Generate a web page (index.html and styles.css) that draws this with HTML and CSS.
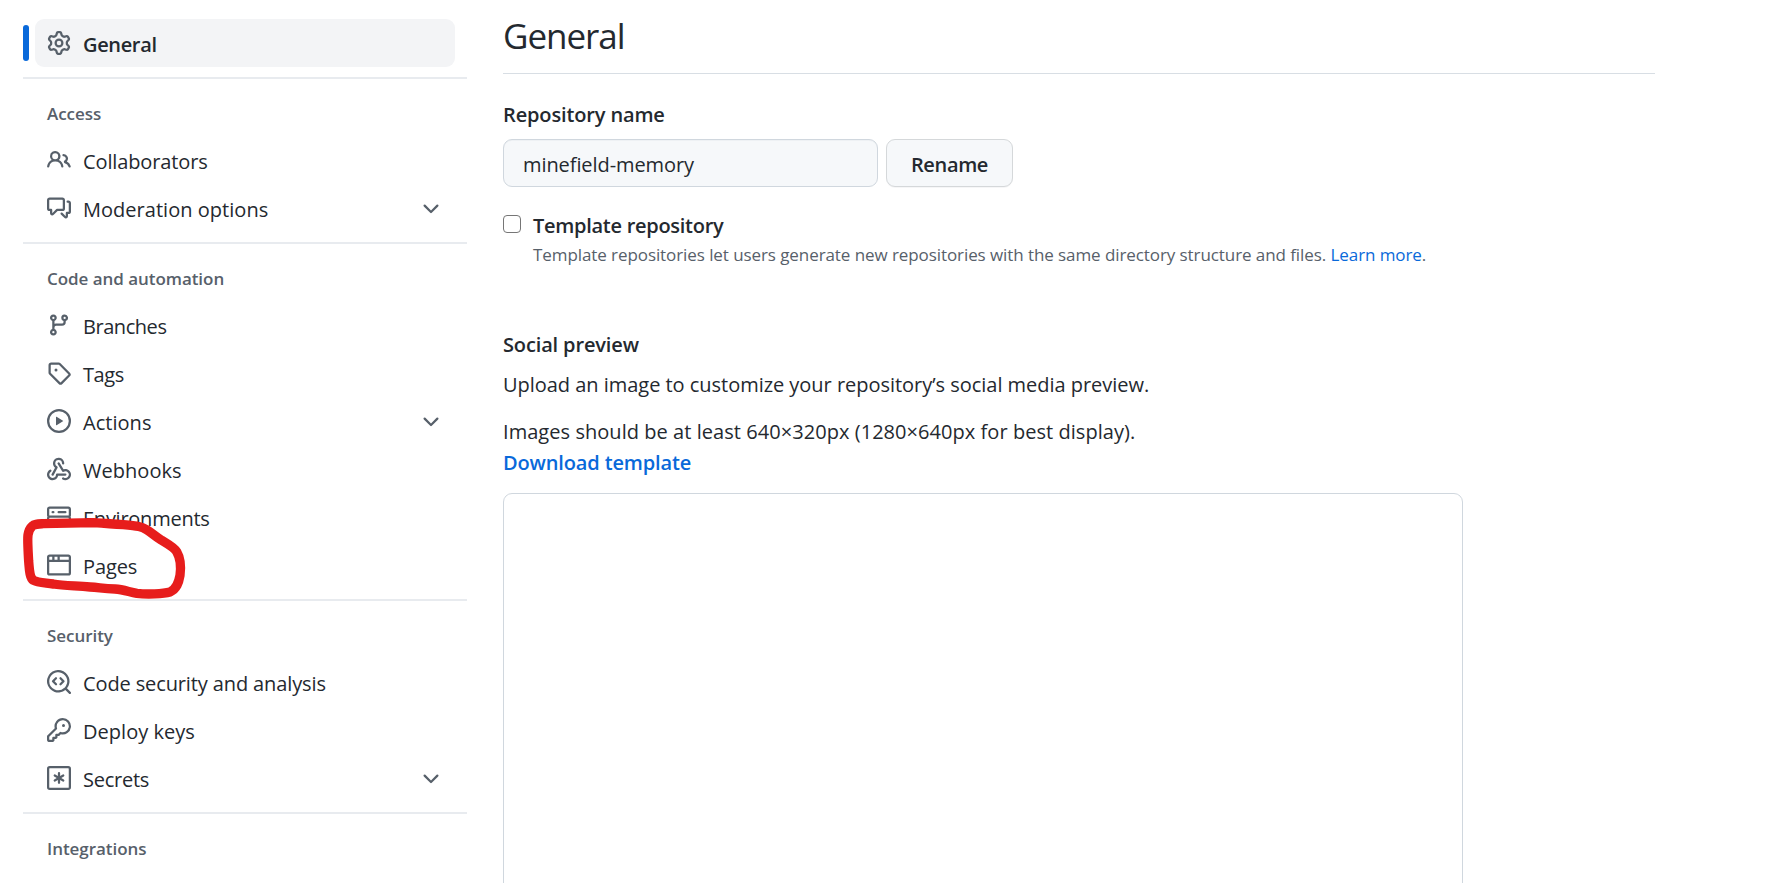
FILE: index.html
```html
<!DOCTYPE html>
<html lang="en">
<head>
<meta charset="utf-8">
<title>General settings</title>
<link rel="stylesheet" href="styles.css">
</head>
<body>
<div class="layout">
<nav class="sidebar">
  <ul class="group">
    <li class="item item-current">
      <svg class="icon" viewBox="0 0 16 16"><path d="M8 0a8.2 8.2 0 0 1 .701.031C9.444.095 9.99.645 10.16 1.29l.288 1.107c.018.066.079.158.212.224.231.114.454.243.668.386.123.082.233.09.299.071l1.103-.303c.644-.176 1.392.021 1.82.63.27.385.506.792.704 1.218.315.675.111 1.422-.364 1.891l-.814.806c-.049.048-.098.147-.088.294.016.257.016.515 0 .772-.01.147.038.246.088.294l.814.806c.475.469.679 1.216.364 1.891a7.977 7.977 0 0 1-.704 1.217c-.428.61-1.176.807-1.82.63l-1.102-.302c-.067-.019-.177-.011-.3.071a5.909 5.909 0 0 1-.668.386c-.133.066-.194.158-.211.224l-.29 1.106c-.168.646-.715 1.196-1.458 1.26a8.006 8.006 0 0 1-1.402 0c-.743-.064-1.289-.614-1.458-1.26l-.289-1.106c-.018-.066-.079-.158-.212-.224a5.738 5.738 0 0 1-.668-.386c-.123-.082-.233-.09-.299-.071l-1.103.303c-.644.176-1.392-.021-1.82-.63a8.12 8.12 0 0 1-.704-1.218c-.315-.675-.111-1.422.363-1.891l.815-.806c.05-.048.098-.147.088-.294a6.214 6.214 0 0 1 0-.772c.01-.147-.038-.246-.088-.294l-.815-.806C.635 6.045.431 5.298.746 4.623a7.92 7.92 0 0 1 .704-1.217c.428-.61 1.176-.807 1.82-.63l1.102.302c.067.019.177.011.3-.071.214-.143.437-.272.668-.386.133-.066.194-.158.211-.224l.29-1.106C6.009.645 6.556.095 7.299.03 7.53.01 7.764 0 8 0Zm-.571 1.525c-.036.003-.108.036-.137.146l-.289 1.105c-.147.561-.549.967-.998 1.189-.173.086-.34.183-.5.29-.417.278-.97.423-1.529.27l-1.103-.303c-.109-.03-.175.016-.195.045-.22.312-.412.644-.573.99-.014.031-.021.11.059.19l.815.806c.411.406.562.957.53 1.456a4.709 4.709 0 0 0 0 .582c.032.499-.119 1.05-.53 1.456l-.815.806c-.081.08-.073.159-.059.19.162.346.353.677.573.989.02.03.085.076.195.046l1.102-.303c.56-.153 1.113-.008 1.53.27.161.107.328.204.501.29.447.222.85.629.997 1.189l.289 1.105c.029.109.101.143.137.146a6.6 6.6 0 0 0 1.142 0c.036-.003.108-.036.137-.146l.289-1.105c.147-.561.549-.967.998-1.189.173-.086.34-.183.5-.29.417-.278.97-.423 1.529-.27l1.103.303c.109.029.175-.016.195-.045.22-.313.411-.644.573-.99.014-.031.021-.11-.059-.19l-.815-.806c-.411-.406-.562-.957-.53-1.456a4.709 4.709 0 0 0 0-.582c-.032-.499.119-1.05.53-1.456l.815-.806c.081-.08.073-.159.059-.19a6.464 6.464 0 0 0-.573-.989c-.02-.03-.085-.076-.195-.046l-1.102.303c-.56.153-1.113.008-1.53-.27a4.44 4.44 0 0 0-.501-.29c-.447-.222-.85-.629-.997-1.189l-.289-1.105c-.029-.11-.101-.143-.137-.146a6.6 6.6 0 0 0-1.142 0ZM11 8a3 3 0 1 1-6 0 3 3 0 0 1 6 0ZM9.5 8a1.5 1.5 0 1 0-3.001.001A1.5 1.5 0 0 0 9.5 8Z"/></svg>
      <span class="label label-current">General</span>
    </li>
  </ul>
  <hr class="divider">
  <h2 class="heading">Access</h2>
  <ul class="group">
    <li class="item">
      <svg class="icon" viewBox="0 0 16 16"><path d="M2 5.5a3.5 3.5 0 1 1 5.898 2.549 5.508 5.508 0 0 1 3.034 4.084.75.75 0 1 1-1.482.235 4 4 0 0 0-7.9 0 .75.75 0 0 1-1.482-.236A5.507 5.507 0 0 1 3.102 8.05 3.493 3.493 0 0 1 2 5.5ZM11 4a3.001 3.001 0 0 1 2.22 5.018 5.01 5.01 0 0 1 2.56 3.012.749.749 0 0 1-.885.954.752.752 0 0 1-.549-.514 3.507 3.507 0 0 0-2.522-2.372.75.75 0 0 1-.574-.73v-.352a.75.75 0 0 1 .416-.672A1.5 1.5 0 0 0 11 5.5.75.75 0 0 1 11 4Zm-5.5-.5a2 2 0 1 0-.001 3.999A2 2 0 0 0 5.5 3.5Z"/></svg>
      <span class="label">Collaborators</span>
    </li>
    <li class="item">
      <svg class="icon" viewBox="0 0 16 16"><path d="M1.75 1h8.5c.966 0 1.75.784 1.75 1.75v5.5A1.75 1.75 0 0 1 10.25 10H7.061l-2.574 2.573A1.458 1.458 0 0 1 2 11.543V10h-.25A1.75 1.75 0 0 1 0 8.25v-5.5C0 1.784.784 1 1.75 1ZM1.5 2.75v5.5c0 .138.112.25.25.25h1a.75.75 0 0 1 .75.75v2.19l2.72-2.72a.749.749 0 0 1 .53-.22h3.5a.25.25 0 0 0 .25-.25v-5.5a.25.25 0 0 0-.25-.25h-8.5a.25.25 0 0 0-.25.25Zm13 2a.25.25 0 0 0-.25-.25h-.5a.75.75 0 0 1 0-1.5h.5c.966 0 1.75.784 1.75 1.75v5.5A1.75 1.75 0 0 1 14.25 12H14v1.543a1.458 1.458 0 0 1-2.487 1.03L9.22 12.28a.749.749 0 0 1 .326-1.275.749.749 0 0 1 .734.215l2.22 2.22v-2.19a.75.75 0 0 1 .75-.75h1a.25.25 0 0 0 .25-.25Z"/></svg>
      <span class="label label-wide">Moderation options</span>
      <svg class="icon chevron" viewBox="0 0 16 16"><path d="M12.78 5.22a.749.749 0 0 1 0 1.06l-4.25 4.25a.749.749 0 0 1-1.06 0L3.22 6.28a.749.749 0 1 1 1.06-1.06L8 8.939l3.72-3.719a.749.749 0 0 1 1.06 0Z"/></svg>
    </li>
  </ul>
  <hr class="divider">
  <h2 class="heading">Code and automation</h2>
  <ul class="group">
    <li class="item">
      <svg class="icon" viewBox="0 0 16 16"><path d="M9.5 3.25a2.25 2.25 0 1 1 3 2.122V6A2.5 2.5 0 0 1 10 8.5H6a1 1 0 0 0-1 1v1.128a2.251 2.251 0 1 1-1.5 0V5.372a2.25 2.25 0 1 1 1.5 0v1.836A2.493 2.493 0 0 1 6 7h4a1 1 0 0 0 1-1v-.628A2.25 2.25 0 0 1 9.5 3.25Zm-6 0a.75.75 0 1 0 1.5 0 .75.75 0 0 0-1.5 0Zm8.25-.75a.75.75 0 1 0 0 1.5.75.75 0 0 0 0-1.5ZM4.25 12a.75.75 0 1 0 0 1.5.75.75 0 0 0 0-1.5Z"/></svg>
      <span class="label label-tight">Branches</span>
    </li>
    <li class="item">
      <svg class="icon" viewBox="0 0 16 16"><path d="M1 7.775V2.75C1 1.784 1.784 1 2.75 1h5.025c.464 0 .91.184 1.238.513l6.25 6.25a1.75 1.75 0 0 1 0 2.474l-5.026 5.026a1.75 1.75 0 0 1-2.474 0l-6.25-6.25A1.752 1.752 0 0 1 1 7.775Zm1.5 0c0 .066.026.13.073.177l6.25 6.25a.25.25 0 0 0 .354 0l5.025-5.025a.25.25 0 0 0 0-.354l-6.25-6.25a.25.25 0 0 0-.177-.073H2.75a.25.25 0 0 0-.25.25ZM6 5a1 1 0 1 1 0 2 1 1 0 0 1 0-2Z"/></svg>
      <span class="label label-tight">Tags</span>
    </li>
    <li class="item">
      <svg class="icon" viewBox="0 0 16 16"><path d="M8 0a8 8 0 1 1 0 16A8 8 0 0 1 8 0ZM1.5 8a6.5 6.5 0 1 0 13 0 6.5 6.5 0 0 0-13 0Zm4.879-2.773 4.264 2.559a.25.25 0 0 1 0 .428l-4.264 2.559A.25.25 0 0 1 6 10.559V5.442a.25.25 0 0 1 .379-.215Z"/></svg>
      <span class="label label-wide">Actions</span>
      <svg class="icon chevron" viewBox="0 0 16 16"><path d="M12.78 5.22a.749.749 0 0 1 0 1.06l-4.25 4.25a.749.749 0 0 1-1.06 0L3.22 6.28a.749.749 0 1 1 1.06-1.06L8 8.939l3.72-3.719a.749.749 0 0 1 1.06 0Z"/></svg>
    </li>
    <li class="item">
      <svg class="icon" viewBox="0 0 16 16"><path d="M5.5 4.25a2.25 2.25 0 0 1 4.5 0 .75.75 0 0 0 1.5 0 3.75 3.75 0 1 0-6.14 2.889l-2.272 4.258a.75.75 0 0 0 1.324.706L7 7.25a.75.75 0 0 0-.309-1.015A2.25 2.25 0 0 1 5.5 4.25Z"/><path d="M7.364 3.607a.75.75 0 0 1 1.03.257l2.608 4.349a3.75 3.75 0 1 1-.628 6.785.75.75 0 0 1 .752-1.299 2.25 2.25 0 1 0-.033-3.88.75.75 0 0 1-1.03-.256L7.107 4.636a.75.75 0 0 1 .257-1.03Z"/><path d="M2.9 8.776A.75.75 0 0 1 2.625 9.8 2.25 2.25 0 1 0 6 11.75a.75.75 0 0 1 .75-.751h5.5a.75.75 0 0 1 0 1.5H7.425a3.751 3.751 0 1 1-5.55-3.998.75.75 0 0 1 1.024.274Z"/></svg>
      <span class="label label-wide">Webhooks</span>
    </li>
    <li class="item">
      <svg class="icon" viewBox="0 0 16 16"><path d="M1.75 1h12.5c.966 0 1.75.784 1.75 1.75v4c0 .372-.116.717-.314 1 .198.283.314.628.314 1v4a1.75 1.75 0 0 1-1.75 1.75H1.75A1.75 1.75 0 0 1 0 12.75v-4c0-.358.109-.707.314-1a1.739 1.739 0 0 1-.314-1v-4C0 1.784.784 1 1.75 1ZM1.5 2.75v4c0 .138.112.25.25.25h12.5a.25.25 0 0 0 .25-.25v-4a.25.25 0 0 0-.25-.25H1.75a.25.25 0 0 0-.25.25Zm.25 5.75a.25.25 0 0 0-.25.25v4c0 .138.112.25.25.25h12.5a.25.25 0 0 0 .25-.25v-4a.25.25 0 0 0-.25-.25ZM7 4.75A.75.75 0 0 1 7.75 4h4.5a.75.75 0 0 1 0 1.5h-4.5A.75.75 0 0 1 7 4.75ZM7.75 10h4.5a.75.75 0 0 1 0 1.5h-4.5a.75.75 0 0 1 0-1.5ZM3 4.75A.75.75 0 0 1 3.75 4h.5a.75.75 0 0 1 0 1.5h-.5A.75.75 0 0 1 3 4.75ZM3.75 10h.5a.75.75 0 0 1 0 1.5h-.5a.75.75 0 0 1 0-1.5Z"/></svg>
      <span class="label label-snug">Environments</span>
    </li>
    <li class="item item-marked">
      <svg class="icon" viewBox="0 0 16 16"><path d="M0 2.75C0 1.784.784 1 1.75 1h12.5c.966 0 1.75.784 1.75 1.75v10.5A1.75 1.75 0 0 1 14.25 15H1.75A1.75 1.75 0 0 1 0 13.25ZM14.5 6h-13v7.25c0 .138.112.25.25.25h12.5a.25.25 0 0 0 .25-.25Zm-6-3.5v2h6V2.75a.25.25 0 0 0-.25-.25ZM5 2.5v2h2v-2Zm-3.25 0a.25.25 0 0 0-.25.25V4.5h2v-2Z"/></svg>
      <span class="label">Pages</span>
      <svg class="scribble" viewBox="45 70 540 300"><path d="M97 109C103 103 112 103 130 102L280 99C325 101 330 103 370 105C415 109 425 111 440 120C455 129 462 137 485 152C510 167 522 173 530 186C541 205 543 235 540 257C536 280 530 298 510 307C490 313 440 315 411 311C385 306 370 300 345 298C310 297 300 294 270 292C220 288 190 288 160 283C130 279 112 279 100 272C88 263 88 235 86 215C84 180 82 150 84 136C86 123 88 117 97 109Z"/></svg>
    </li>
  </ul>
  <hr class="divider">
  <h2 class="heading">Security</h2>
  <ul class="group">
    <li class="item">
      <svg class="icon" viewBox="0 0 16 16"><path d="M8.47 4.97a.75.75 0 0 0 0 1.06L9.94 7.5 8.47 8.97a.75.75 0 1 0 1.06 1.06l2-2a.75.75 0 0 0 0-1.06l-2-2a.75.75 0 0 0-1.06 0ZM6.53 6.03a.75.75 0 0 0-1.06-1.06l-2 2a.75.75 0 0 0 0 1.06l2 2a.75.75 0 1 0 1.06-1.06L5.06 7.5l1.47-1.47Z"/><path d="M12.246 13.307a7.501 7.501 0 1 1 1.06-1.06l2.474 2.473a.749.749 0 0 1-.326 1.275.749.749 0 0 1-.734-.215ZM1.5 7.5a6.002 6.002 0 0 0 3.608 5.504 6.002 6.002 0 0 0 6.486-1.117.748.748 0 0 1 .292-.293A6 6 0 1 0 1.5 7.5Z"/></svg>
      <span class="label">Code security and analysis</span>
    </li>
    <li class="item">
      <svg class="icon" viewBox="0 0 16 16"><path d="M10.5 0a5.499 5.499 0 1 1-1.288 10.848l-.932.932a.749.749 0 0 1-.53.22H7v.75a.749.749 0 0 1-.22.53l-.5.5a.749.749 0 0 1-.53.22H5v.75a.749.749 0 0 1-.22.53l-.5.5a.749.749 0 0 1-.53.22h-2A1.75 1.75 0 0 1 0 14.25v-2c0-.199.079-.389.22-.53l4.932-4.932A5.5 5.5 0 0 1 10.5 0Zm-4 5.5c-.001.431.069.86.205 1.269a.75.75 0 0 1-.181.768L1.5 12.56v1.69c0 .138.112.25.25.25h1.69l.06-.06v-1.19a.75.75 0 0 1 .75-.75h1.19l.06-.06v-1.19a.75.75 0 0 1 .75-.75h1.19l1.023-1.025a.75.75 0 0 1 .768-.18A4 4 0 1 0 6.5 5.5ZM11 6a1 1 0 1 1 0-2 1 1 0 0 1 0 2Z"/></svg>
      <span class="label label-wide">Deploy keys</span>
    </li>
    <li class="item">
      <svg class="icon icon-line" viewBox="0 0 16 16"><rect x=".75" y=".75" width="14.5" height="14.5" rx="1.1"/><path d="M8 4.8v6.4M5.15 6.35l5.7 3.3M10.85 6.35l-5.7 3.3"/></svg>
      <span class="label label-snug">Secrets</span>
      <svg class="icon chevron" viewBox="0 0 16 16"><path d="M12.78 5.22a.749.749 0 0 1 0 1.06l-4.25 4.25a.749.749 0 0 1-1.06 0L3.22 6.28a.749.749 0 1 1 1.06-1.06L8 8.939l3.72-3.719a.749.749 0 0 1 1.06 0Z"/></svg>
    </li>
  </ul>
  <hr class="divider">
  <h2 class="heading">Integrations</h2>
</nav>
<main class="content">
  <h1 class="title">General</h1>
  <form class="rename">
    <label class="strong field-label" for="repo">Repository name</label>
    <div class="field-row">
      <input class="field" id="repo" type="text" value="minefield-memory">
      <button class="button" type="button">Rename</button>
    </div>
  </form>
  <div class="option">
    <input class="check" id="template" type="checkbox">
    <div>
      <label class="strong option-label" for="template">Template repository</label>
      <p class="note">Template repositories let users generate new repositories with the same directory structure and files. <a class="link" href="#">Learn more</a>.</p>
    </div>
  </div>
  <section class="social">
    <h2 class="strong social-title">Social preview</h2>
    <p class="text text-upload">Upload an image to customize your repository’s social media preview.</p>
    <p class="text text-size">Images should be at least 640×320px (1280×640px for best display).</p>
    <a class="strong link download" href="#">Download template</a>
    <div class="preview"></div>
  </section>
</main>
</div>
</body>
</html>
```
FILE: styles.css
```css
* { box-sizing: border-box; margin: 0; padding: 0; }
body {
  height: 883px;
  overflow: hidden;
  background: #fff;
  color: #24292f;
  font: 20px/30px "Open Sans", "Noto Sans", sans-serif;
}
.layout { display: flex; gap: 36px; height: 883px; padding-left: 23px; overflow: hidden; }
.sidebar { width: 444px; flex: none; padding-top: 19px; }
.group { list-style: none; padding: 0 12px; }
.item {
  position: relative;
  display: flex;
  align-items: center;
  height: 48px;
  padding: 0 12px;
  border-radius: 9px;
}
.item-current { background: #f3f4f6; }
.item-current::before {
  content: "";
  position: absolute;
  left: -12px;
  top: 6px;
  width: 6px;
  height: 36px;
  border-radius: 9px;
  background: #0969da;
}
.icon { width: 24px; height: 24px; flex: none; fill: #57606a; }
.icon-line { fill: none; stroke: #57606a; stroke-width: 1.5; stroke-linecap: round; }
.label { margin-left: 12px; padding-top: 3px; letter-spacing: -.12px; white-space: nowrap; }
.label-wide { letter-spacing: .03px; }
.label-snug { letter-spacing: -.25px; }
.label-tight { letter-spacing: -.45px; }
.label-current { font-weight: 600; letter-spacing: -.35px; }
.chevron { margin: 2px 0 0 auto; }
.scribble {
  position: absolute;
  left: -20px;
  top: -28px;
  width: 180px;
  height: 100px;
  fill: none;
  stroke: #e71d1c;
  stroke-width: 28;
  stroke-linejoin: round;
  z-index: 1;
}
.divider { height: 2px; margin-top: 10px; border: 0; background: #e8ebef; }
.heading {
  height: 57px;
  padding: 21px 24px 0;
  color: #57606a;
  font-size: 17px;
  font-weight: 600;
  line-height: 27px;
  letter-spacing: -.05px;
}
.content { width: 1152px; flex: none; }
.title {
  height: 74px;
  padding-top: 12px;
  border-bottom: 1px solid #d8dee4;
  font-size: 35px;
  font-weight: 400;
  line-height: 48px;
  letter-spacing: -1.05px;
}
.strong { display: block; font-size: 20px; font-weight: 600; letter-spacing: -.14px; }
.option-label { letter-spacing: -.28px; }
.rename { padding-top: 26px; }
.field-row { display: flex; gap: 8px; margin-top: 9px; }
.field {
  width: 375px;
  height: 48px;
  padding: 2px 19px 0;
  border: 1px solid #d0d7de;
  border-radius: 9px;
  background: #f6f8fa;
  box-shadow: inset 0 1px 0 rgba(208, 215, 222, .2);
  color: #24292f;
  font: inherit;
  letter-spacing: -.08px;
}
.button {
  width: 127px;
  height: 48px;
  padding-top: 3px;
  border: 1px solid #d5d8da;
  border-radius: 9px;
  background: #f6f8fa;
  box-shadow: 0 1px 0 rgba(31, 35, 40, .04);
  color: #24292f;
  font: inherit;
  font-weight: 600;
  letter-spacing: -.35px;
}
.option { display: flex; gap: 12px; margin-top: 24px; }
.check {
  appearance: none;
  width: 18px;
  height: 18px;
  margin-top: 4px;
  border: 1.5px solid #767676;
  border-radius: 4px;
  background: #fff;
}
.note { color: #57606a; font-size: 17px; line-height: 27px; letter-spacing: -.08px; white-space: nowrap; }
.link { color: #0969da; text-decoration: none; }
.social { margin-top: 62px; }
.text-upload { margin-top: 10px; letter-spacing: -.03px; }
.text-size { margin-top: 17px; letter-spacing: .05px; }
.download { margin-top: 1px; }
.preview { width: 960px; height: 480px; margin-top: 15px; border: 1px solid #d0d7de; border-radius: 9px; }
```
